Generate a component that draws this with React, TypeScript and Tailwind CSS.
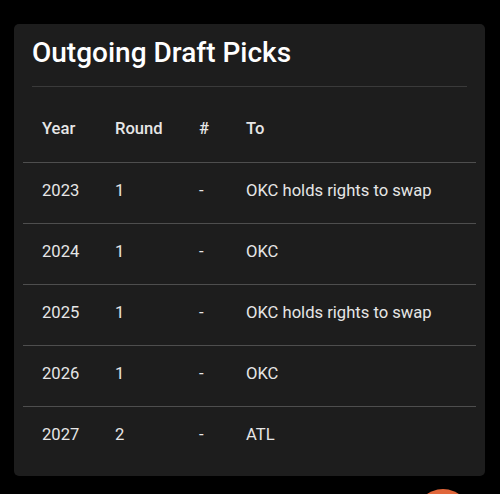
import React from "react";

const picks = [
  { year: "2023", round: "1", num: "-", to: "OKC holds rights to swap" },
  { year: "2024", round: "1", num: "-", to: "OKC" },
  { year: "2025", round: "1", num: "-", to: "OKC holds rights to swap" },
  { year: "2026", round: "1", num: "-", to: "OKC" },
  { year: "2027", round: "2", num: "-", to: "ATL" },
];

export default function App() {
  return (
    <div
      className="relative h-[494px] w-[500px] overflow-hidden bg-black pl-[14px] pt-6"
      style={{ fontFamily: "Roboto, 'Liberation Sans', sans-serif" }}
    >
      <div className="h-[452px] w-[471px] rounded-[5px] bg-[#1d1d1d]">
        <div className="px-[18px] pt-[12px]">
          <h2 className="border-b border-[#3a3a3a] pb-[16px] text-[28px] font-medium leading-[34px] text-white">
            Outgoing Draft Picks
          </h2>
        </div>
        <div className="mt-[14px] px-[9px]">
          <table className="w-full border-collapse text-left text-[16.6px] text-[#e6e6e6]">
            <thead>
              <tr className="h-[61px] border-b border-[#4e4e4e]">
                <th className="w-[73px] pb-[4px] pl-[19px] font-medium">Year</th>
                <th className="w-[84px] pb-[4px] pl-[19px] font-medium">Round</th>
                <th className="w-[47px] pb-[4px] pl-[19px] font-medium">#</th>
                <th className="pb-[4px] pl-[19px] font-medium">To</th>
              </tr>
            </thead>
            <tbody>
              {picks.map((p, i) => (
                <tr
                  key={p.year}
                  className={
                    i < picks.length - 1 ? "h-[61px] border-b border-[#4e4e4e]" : "h-[61px]"
                  }
                >
                  <td className="pb-[2px] pl-[19px]">{p.year}</td>
                  <td className="pb-[2px] pl-[19px]">{p.round}</td>
                  <td className="pb-[2px] pl-[19px]">{p.num}</td>
                  <td className="pb-[2px] pl-[19px]">{p.to}</td>
                </tr>
              ))}
            </tbody>
          </table>
        </div>
      </div>
      <div className="absolute left-[415px] top-[489px] h-14 w-14 rounded-full bg-[#e0663a]" />
    </div>
  );
}
